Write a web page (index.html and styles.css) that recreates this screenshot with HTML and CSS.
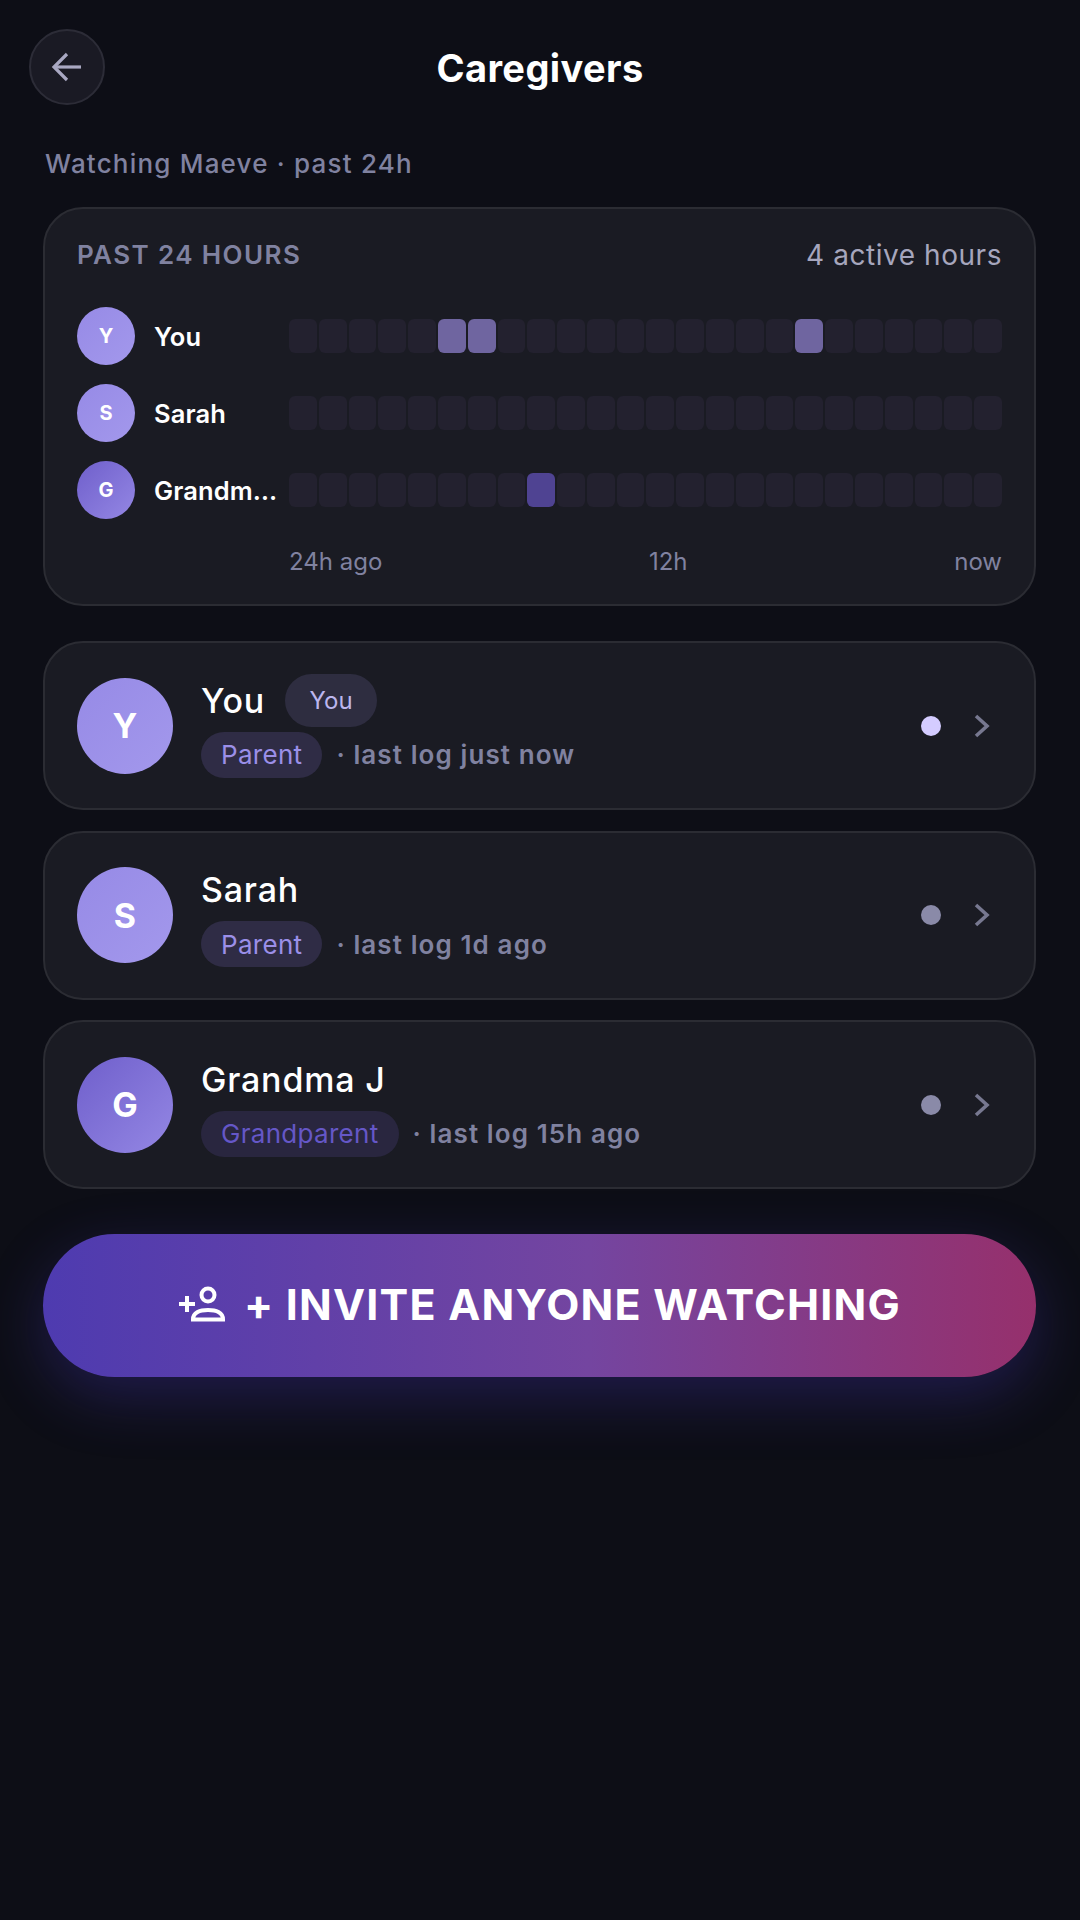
FILE: index.html
```html
<!DOCTYPE html>
<html lang="en">
<head>
  <meta charset="UTF-8">
  <meta name="viewport" content="width=device-width, initial-scale=1.0">
  <title>Caregivers</title>
  <link rel="stylesheet" href="styles.css">
</head>
<body>
  <header class="topbar">
    <button class="back-btn" type="button" aria-label="Back">
      <svg width="36" height="36" viewBox="0 0 36 36" fill="none" stroke="#a9a8c2" stroke-width="3.2">
        <path d="M32 18H5"/>
        <path d="M18 5 5 18l13 13"/>
      </svg>
    </button>
    <h1>Caregivers</h1>
  </header>

  <main class="content">
    <p class="subtitle">Watching Maeve · past 24h</p>

    <section class="card activity">
      <div class="activity-head">
        <span class="activity-title">PAST 24 HOURS</span>
        <span class="activity-count">4 active hours</span>
      </div>

      <div class="activity-row">
        <div class="avatar avatar-sm avatar-light">Y</div>
        <div class="activity-name">You</div>
        <div class="cells">
          <i></i><i></i><i></i><i></i><i></i><i class="on"></i><i class="on"></i><i></i>
          <i></i><i></i><i></i><i></i><i></i><i></i><i></i><i></i>
          <i></i><i class="on"></i><i></i><i></i><i></i><i></i><i></i><i></i>
        </div>
      </div>
      <div class="activity-row">
        <div class="avatar avatar-sm avatar-light">S</div>
        <div class="activity-name">Sarah</div>
        <div class="cells">
          <i></i><i></i><i></i><i></i><i></i><i></i><i></i><i></i>
          <i></i><i></i><i></i><i></i><i></i><i></i><i></i><i></i>
          <i></i><i></i><i></i><i></i><i></i><i></i><i></i><i></i>
        </div>
      </div>
      <div class="activity-row">
        <div class="avatar avatar-sm avatar-deep">G</div>
        <div class="activity-name">Grandma J</div>
        <div class="cells">
          <i></i><i></i><i></i><i></i><i></i><i></i><i></i><i></i>
          <i class="on-deep"></i><i></i><i></i><i></i><i></i><i></i><i></i><i></i>
          <i></i><i></i><i></i><i></i><i></i><i></i><i></i><i></i>
        </div>
      </div>

      <div class="axis">
        <span>24h ago</span>
        <span>12h</span>
        <span>now</span>
      </div>
    </section>

    <section class="people">
      <article class="card person">
        <div class="avatar avatar-lg avatar-light">Y</div>
        <div class="person-info">
          <div class="person-top">
            <span class="person-name">You</span>
            <span class="you-chip">You</span>
          </div>
          <div class="person-meta">
            <span class="role">Parent</span>
            <span class="last-log">· last log just now</span>
          </div>
        </div>
        <span class="dot dot-live"></span>
        <svg class="chevron" width="16" height="24" viewBox="0 0 16 24" fill="none" stroke="#777890" stroke-width="3.6">
          <path d="M2 2l11 10L2 22"/>
        </svg>
      </article>

      <article class="card person">
        <div class="avatar avatar-lg avatar-light">S</div>
        <div class="person-info">
          <div class="person-top">
            <span class="person-name">Sarah</span>
          </div>
          <div class="person-meta">
            <span class="role">Parent</span>
            <span class="last-log">· last log 1d ago</span>
          </div>
        </div>
        <span class="dot"></span>
        <svg class="chevron" width="16" height="24" viewBox="0 0 16 24" fill="none" stroke="#777890" stroke-width="3.6">
          <path d="M2 2l11 10L2 22"/>
        </svg>
      </article>

      <article class="card person">
        <div class="avatar avatar-lg avatar-deep">G</div>
        <div class="person-info">
          <div class="person-top">
            <span class="person-name">Grandma J</span>
          </div>
          <div class="person-meta">
            <span class="role role-deep">Grandparent</span>
            <span class="last-log">· last log 15h ago</span>
          </div>
        </div>
        <span class="dot"></span>
        <svg class="chevron" width="16" height="24" viewBox="0 0 16 24" fill="none" stroke="#777890" stroke-width="3.6">
          <path d="M2 2l11 10L2 22"/>
        </svg>
      </article>
    </section>

    <button class="invite-btn" type="button">
      <svg width="48" height="36" viewBox="0 0 48 36" fill="none" stroke="#fff" stroke-width="4">
        <path d="M1 18h16M9 10v16"/>
        <circle cx="30" cy="9" r="6.500"/>
        <path d="M15 33.500c0-7 7-9.500 15-9.500s15 2.500 15 9.500z"/>
      </svg>
      <span>+ INVITE ANYONE WATCHING</span>
    </button>
  </main>
</body>
</html>
```

FILE: styles.css
```css
* { box-sizing: border-box; }
html, body { margin: 0; padding: 0; }
body { min-height: 1920px; background: #0d0e16; color: #fff; font-family: Inter, "Noto Sans", sans-serif; }

.topbar { display: grid; grid-template-columns: 1fr auto 1fr; align-items: center; padding: 29px 29px 0; }
.topbar h1 { grid-column: 2; margin: 2px 0 0; font-size: 38px; font-weight: 700; line-height: 74px; letter-spacing: 0.4px; }
.back-btn { grid-column: 1; grid-row: 1; display: flex; align-items: center; justify-content: center; width: 76px; height: 76px; padding: 0; border: 2px solid #2c2c37; border-radius: 50%; background: #1a1a24; }

.content { padding: 0 44px 0 43px; }
.subtitle { margin: 40px 0 0; padding-left: 2px; font-size: 26px; font-weight: 500; line-height: 38px; letter-spacing: 1.2px; color: #8082a0; }

.card { border: 2px solid #2b2c33; background: #1a1b23; border-radius: 40px; }

.activity { height: 399px; margin-top: 24px; padding: 28px 32px 0; }
.activity-head { display: flex; justify-content: space-between; align-items: center; height: 36px; margin-bottom: 34px; }
.activity-title { margin-top: -2px; font-size: 26px; font-weight: 600; letter-spacing: 1.4px; color: #8082a0; }
.activity-count { font-size: 28px; letter-spacing: 0.55px; color: #a6a6bd; }

.activity-row { display: flex; align-items: center; height: 58px; margin-bottom: 19px; }
.activity-name { width: 128px; margin-left: 19px; margin-right: 7px; overflow: hidden; white-space: nowrap; text-overflow: ellipsis; font-size: 25.5px; font-weight: 600; letter-spacing: 0.1px; }

.cells { flex: 1; display: grid; grid-template-columns: repeat(24, 1fr); gap: 2px; }
.cells i { display: block; height: 34px; border-radius: 6px; background: #23212f; }
.cells .on { background: #6f65a0; }
.cells .on-deep { background: #4f4392; }

.axis { display: flex; justify-content: space-between; margin: 27px 0 0 212px; font-size: 24px; line-height: 32px; color: #8082a0; }

.avatar { flex: none; display: flex; align-items: center; justify-content: center; border-radius: 50%; font-weight: 700; color: #fff; }
.avatar-sm { width: 58px; height: 58px; font-size: 20px; }
.avatar-lg { width: 96px; height: 96px; font-size: 34px; }
.avatar-light { background: linear-gradient(135deg, #968ae6, #a398ec); }
.avatar-deep { background: linear-gradient(135deg, #6f5fcb, #9487e4); }

.people { display: flex; flex-direction: column; gap: 20.5px; margin-top: 35px; }
.person { display: flex; align-items: center; height: 169px; padding: 0 32px; }
.person-info { flex: 1; margin-left: 28px; }
.person-top { display: flex; align-items: center; gap: 20px; min-height: 53px; }
.person-name { font-size: 34px; font-weight: 500; letter-spacing: 0.8px; }
.you-chip { display: flex; align-items: center; justify-content: center; width: 92px; height: 53px; border-radius: 27px; background: #2e2d40; font-size: 24px; color: #bcb6ee; }
.person-meta { display: flex; align-items: center; gap: 14px; margin-top: 5px; }
.role { display: flex; align-items: center; height: 46px; padding: 0 20px; border-radius: 23px; background: #2f2c45; font-size: 26px; letter-spacing: 0.3px; color: #9b8fe8; }
.role-deep { background: #29263f; color: #6557c7; }
.last-log { font-size: 26px; font-weight: 600; letter-spacing: 1.1px; color: #8082a0; }

.dot { flex: none; width: 20px; height: 20px; border-radius: 50%; background: #8a8aa8; }
.dot-live { background: #d4ccff; }
.chevron { flex: none; margin: 0 12px 0 33px; }

.invite-btn { display: flex; align-items: center; justify-content: center; gap: 18px; width: 100%; height: 143px; margin-top: 45px; padding: 0 0 3px; border: 0; border-radius: 72px; background: linear-gradient(90deg, #4e3bb0, #7445a0 55%, #96306c); box-shadow: 0 20px 60px rgba(72, 56, 190, 0.32); font-family: inherit; font-size: 43px; font-weight: 700; letter-spacing: 1.2px; color: #fff; }
```
